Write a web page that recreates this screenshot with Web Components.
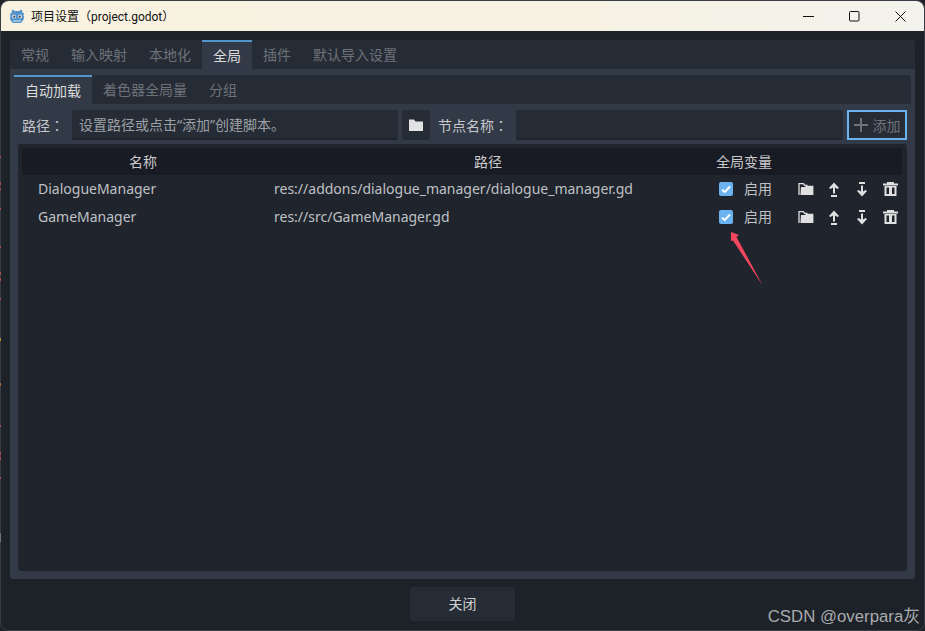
<!DOCTYPE html>
<html lang="zh">
<head>
<meta charset="utf-8">
<title>项目设置</title>
<style>
    html, body { margin: 0; height: 100%; background: #1d2128; overflow: hidden; }
    body { font-family: "Noto Sans", "Noto Sans CJK SC", sans-serif; }
</style>
</head>
<body>
<settings-window></settings-window>

<script>
const ICONS = {
    folder: '<svg width="16" height="14" viewBox="0 0 16 14"><path fill="#e2e2e2" d="M1 1.500h5l1.500 2H15v9.500H1z"/></svg>',
    open: '<svg width="16" height="14" viewBox="0 0 16 14"><path fill="none" stroke="#e0e0e0" stroke-width="1.300" d="M1 13V1.700h4.500l1 1.600h3"/><path fill="#e0e0e0" d="M3 5h4l1-1.200h7.400V13H2.400z"/></svg>',
    up: '<svg width="12" height="15" viewBox="0 0 12 15"><path fill="#e0e0e0" d="M6 .5 11 6 9.500 7 7 5.500v6H5v-6L2.500 7 1 6z"/><path fill="#e0e0e0" d="M3 13h6v2H3z"/></svg>',
    down: '<svg width="12" height="15" viewBox="0 0 12 15"><path fill="#e0e0e0" d="M3 0h6v2H3z"/><path fill="#e0e0e0" d="M5 3.500h2v6L9.500 8 11 9l-5 5.500L1 9l1.500-1L5 9.500z"/></svg>',
    trash: '<svg width="15" height="14" viewBox="0 0 15 14"><path fill="#e0e0e0" d="M0 1.500h15v2H0zM4 0h7v1.500H4zM1.500 4h12v10h-12z"/><path fill="#20242d" d="M3.500 5.500h2.500V12H3.500zM9 5.500h2.500V12H9z"/></svg>',
    plus: '<svg width="14" height="14" viewBox="0 0 14 14"><path fill="#6f7278" d="M6 0h2v6h6v2H8v6H6V8H0V6h6z"/></svg>',
    check: '<svg width="10" height="9" viewBox="0 0 10 9"><path fill="none" stroke="#fff" stroke-width="2" d="M1 4.800 3.800 7 9 1.500"/></svg>',
    godot: '<svg width="14" height="15" viewBox="0 0 14 15"><path fill="#5293c9" d="M3 .5 4.500 2h5L11 .5l1.500 1-.5 1.500 2 1.500-.5 2 .5 1-.3 3-2.700 3.500H2.800L.3 11 0 8l.5-1L0 5l2-1.500L1.500 2z"/><circle cx="4" cy="7.500" r="2" fill="#e8edf0"/><circle cx="10" cy="7.500" r="2" fill="#e8edf0"/><circle cx="4.200" cy="7.700" r="1.100" fill="#3d4a58"/><circle cx="9.800" cy="7.700" r="1.100" fill="#3d4a58"/><path fill="#dbe6ee" d="M3 11.500h8v1H3z"/></svg>'
};

class TitleBar extends HTMLElement {
    connectedCallback() {
        this.attachShadow({ mode: 'open' });
        this.shadowRoot.innerHTML = `
        <style>
            :host {
                display: flex;
                align-items: center;
                height: 30px;
                background: linear-gradient(90deg, #f9f2e0 0%, #f7f2e3 60%, #f3f2ec 100%);
                color: #111;
                font: 12px Roboto, "Noto Sans CJK SC", sans-serif;
                border-radius: 8px 8px 0 0;
            }
            .logo { display: flex; margin-left: 9px; margin-right: 7px; }
            .title { flex: 1; padding-bottom: 1px; }
            .ctl { width: 46px; height: 30px; display: flex; align-items: center; justify-content: center; }
        </style>
        <span class="logo">${ICONS.godot}</span>
        <span class="title">项目设置（project.godot）</span>
        <span class="ctl"><svg width="11" height="11" viewBox="0 0 11 11"><path stroke="#111" d="M0 5.500h11"/></svg></span>
        <span class="ctl"><svg width="11" height="11" viewBox="0 0 11 11"><rect x=".5" y=".5" width="9.500" height="9.500" rx="1" fill="none" stroke="#111"/></svg></span>
        <span class="ctl" style="margin-right:1px"><svg width="11" height="11" viewBox="0 0 11 11"><path stroke="#111" d="M.5.500l10 10M10.500.500l-10 10"/></svg></span>
        `;
    }
}

class TabStrip extends HTMLElement {
    connectedCallback() {
        const tabs = this.getAttribute('tabs').split(',');
        const active = Number(this.getAttribute('active'));
        this.attachShadow({ mode: 'open' });
        this.shadowRoot.innerHTML = `
        <style>
            :host {
                display: flex;
                height: 29px;
                background: #262c36;
                font-size: 14px;
                color: #6d7279;
                border-radius: 3px 3px 0 0;
            }
            .tab {
                padding: 0 11px;
                line-height: 29px;
                box-sizing: border-box;
                white-space: nowrap;
            }
            .tab.on {
                background: #333a47;
                color: #dcdcdc;
                border-top: 2px solid #5197cc;
                line-height: 27px;
            }
        </style>
        ${tabs.map((t, i) => `<div class="tab ${i === active ? 'on' : ''}">${t}</div>`).join('')}
        `;
    }
}

class PathBar extends HTMLElement {
    connectedCallback() {
        this.attachShadow({ mode: 'open' });
        this.shadowRoot.innerHTML = `
        <style>
            :host {
                display: flex;
                align-items: stretch;
                height: 30px;
                margin: 6px 4px 4px 8px;
                font-size: 14px;
                color: #c6c8cb;
            }
            .label { display: flex; align-items: center; white-space: nowrap; }
            .colon { font-family: "Noto Sans CJK TC", sans-serif; }
            .field {
                box-sizing: border-box;
                background: #262c36;
                border-bottom: 2px solid #1f232b;
                border-radius: 2px;
                display: flex;
                align-items: center;
                padding-left: 7px;
                color: #9da0a5;
            }
            .browse {
                width: 28px;
                margin: 0 8px 0 4px;
                background: #262c36;
                border-radius: 3px;
                display: flex;
                align-items: center;
                justify-content: center;
            }
            .add {
                box-sizing: border-box;
                width: 60px;
                margin-left: 4px;
                border: 2px solid #6bb2f0;
                display: flex;
                align-items: center;
                justify-content: center;
                gap: 5px;
                color: #6f7278;
                background: #262c36;
            }
        </style>
        <span class="label" style="width:50px">路径<span class="colon">：</span></span>
        <div class="field" style="width:326px">设置路径或点击“添加”创建脚本。</div>
        <div class="browse">${ICONS.folder}</div>
        <span class="label" style="width:78px">节点名称<span class="colon">：</span></span>
        <div class="field" style="width:327px"></div>
        <div class="add">${ICONS.plus}<span>添加</span></div>
        `;
    }
}

class AutoloadRow extends HTMLElement {
    connectedCallback() {
        this.attachShadow({ mode: 'open' });
        this.shadowRoot.innerHTML = `
        <style>
            :host {
                display: flex;
                align-items: center;
                height: 28px;
                font-size: 14px;
                color: #bfc1c4;
                white-space: nowrap;
            }
            .name, .path, .check, .on, .btns { flex-shrink: 0; }
            .name { box-sizing: border-box; width: 252px; padding-left: 16px; }
            .path { width: 445px; }
            .check {
                width: 14px;
                height: 14px;
                background: #6bb2f0;
                border-radius: 2px;
                display: flex;
                align-items: center;
                justify-content: center;
            }
            .on { width: 48px; margin-left: 11px; }
            .btns { display: flex; }
            .btn { width: 28px; display: flex; justify-content: center; }
            .name, .path, .on { padding-bottom: 2px; }
        </style>
        <span class="name">${this.getAttribute('name')}</span>
        <span class="path">${this.getAttribute('path')}</span>
        <span class="check">${ICONS.check}</span>
        <span class="on">启用</span>
        <span class="btns">
            <span class="btn">${ICONS.open}</span>
            <span class="btn">${ICONS.up}</span>
            <span class="btn">${ICONS.down}</span>
            <span class="btn">${ICONS.trash}</span>
        </span>
        `;
    }
}

class AutoloadTree extends HTMLElement {
    connectedCallback() {
        this.attachShadow({ mode: 'open' });
        this.shadowRoot.innerHTML = `
        <style>
            :host {
                display: block;
                flex: 1;
                margin: 0 4px 8px 4px;
                padding: 4px 5px 0 4px;
                background: #20242d;
                border-radius: 3px;
            }
            .head {
                display: flex;
                height: 27px;
                line-height: 27px;
                background: #181b23;
                border-radius: 3px;
                font-size: 14px;
                color: #c9cacc;
                text-align: center;
            }
            .c1 { width: 242px; }
            .c2 { width: 448px; }
            .c3 { width: 64px; }
        </style>
        <div class="head">
            <div class="c1">名称</div>
            <div class="c2">路径</div>
            <div class="c3">全局变量</div>
        </div>
        <slot></slot>
        `;
    }
}

class SettingsWindow extends HTMLElement {
    connectedCallback() {
        this.attachShadow({ mode: 'open' });
        this.shadowRoot.innerHTML = `
        <style>
            :host {
                display: flex;
                flex-direction: column;
                position: relative;
                box-sizing: border-box;
                width: 925px;
                height: 631px;
                border: 1px solid #383c44;
                background: #1d2128;
                border-radius: 8px;
                font-family: "Noto Sans", "Noto Sans CJK SC", sans-serif;
            }
            .body { flex: 1; display: flex; flex-direction: column; padding: 9px 9px 0 9px; }
            .page { flex: 0 0 539px; display: flex; flex-direction: column; background: #333a47; border-radius: 3px; }
            .inner { display: flex; flex-direction: column; flex: 1; padding: 6px 4px 0 4px; }
            .foot { flex: 1; display: flex; justify-content: center; padding-top: 8px; box-sizing: border-box; }
            .close {
                width: 105px;
                height: 34px;
                line-height: 34px;
                text-align: center;
                background: #262c36;
                border-radius: 3px;
                font-size: 14px;
                color: #d0d1d3;
            }
            .arrow { position: absolute; left: 725px; top: 227px; }
            .specks { position: absolute; left: -1px; top: -1px; }
            .mark {
                position: absolute;
                right: 4px;
                bottom: 3px;
                font: 16.800px "Liberation Sans", "Noto Sans CJK SC", sans-serif;
                color: #a9abae;
            }
        </style>
        <title-bar></title-bar>
        <div class="body">
            <div class="page">
                <tab-strip tabs="常规,输入映射,本地化,全局,插件,默认导入设置" active="3"></tab-strip>
                <div class="inner">
                    <tab-strip tabs="自动加载,着色器全局量,分组" active="0"></tab-strip>
                    <path-bar></path-bar>
                    <autoload-tree>
                        <autoload-row name="DialogueManager" path="res://addons/dialogue_manager/dialogue_manager.gd"></autoload-row>
                        <autoload-row name="GameManager" path="res://src/GameManager.gd"></autoload-row>
                    </autoload-tree>
                </div>
            </div>
            <div class="foot"><div class="close">关闭</div></div>
        </div>
        <svg class="specks" width="1" height="631" fill="#a65050">
            <rect y="156" width="1" height="2"/><rect y="182" width="1" height="3"/><rect y="188" width="1" height="2"/>
            <rect y="208" width="1" height="2"/><rect y="246" width="1" height="2"/><rect y="272" width="1" height="3"/>
            <rect y="278" width="1" height="3"/><rect y="298" width="1" height="2"/>
            <rect y="338" width="1" height="3" fill="#a89430"/><rect y="383" width="1" height="3" fill="#a86e38"/>
            <rect y="425" width="1" height="2"/><rect y="452" width="1" height="3"/><rect y="457" width="1" height="3"/>
            <rect y="477" width="1" height="2"/><rect y="533" width="1" height="9" fill="#70757c"/>
        </svg>
        <svg class="arrow" width="42" height="60" viewBox="0 0 42 60"><path fill="#f2475f" d="M5 4 13 7 10.500 9 37 58 7 12.500 5 13z"/></svg>
        <span class="mark">CSDN @overpara灰</span>
        `;
    }
}

customElements.define('title-bar', TitleBar);
customElements.define('tab-strip', TabStrip);
customElements.define('path-bar', PathBar);
customElements.define('autoload-row', AutoloadRow);
customElements.define('autoload-tree', AutoloadTree);
customElements.define('settings-window', SettingsWindow);
</script>
</body>
</html>
